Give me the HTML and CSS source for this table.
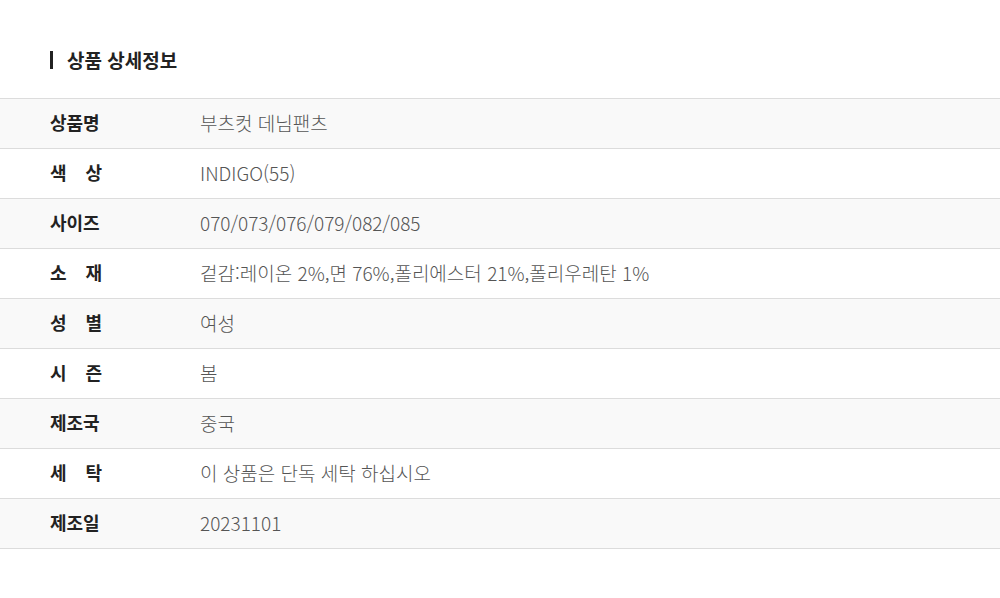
FILE: index.html
```html
<!DOCTYPE html>
<html lang="ko">
<head>
  <meta charset="UTF-8" />
  <meta name="viewport" content="width=device-width, initial-scale=1.0"/>
  <title>상품 상세정보</title>
  <link rel="stylesheet" href="styles.css">
</head>
<body>

  <h2 class="title">상품 상세정보</h2>

  <div class="info">
    <div class="row odd"><span class="label">상품명</span><span class="value">부츠컷 데님팬츠</span></div>
    <div class="row"><span class="label">색 상</span><span class="value">INDIGO(55)</span></div>
    <div class="row odd"><span class="label">사이즈</span><span class="value">070/073/076/079/082/085</span></div>
    <div class="row"><span class="label">소 재</span><span class="value">겉감:레이온 2%,면 76%,폴리에스터 21%,폴리우레탄 1%</span></div>
    <div class="row odd"><span class="label">성 별</span><span class="value">여성</span></div>
    <div class="row"><span class="label">시 즌</span><span class="value">봄</span></div>
    <div class="row odd"><span class="label">제조국</span><span class="value">중국</span></div>
    <div class="row"><span class="label">세 탁</span><span class="value">이 상품은 단독 세탁 하십시오</span></div>
    <div class="row odd"><span class="label">제조일</span><span class="value">20231101</span></div>
  </div>

</body>
</html>
```

FILE: styles.css
```css
body {
  margin: 0;
  font-family: "Noto Sans CJK KR", "Noto Sans", sans-serif;
  background: #fff;
  color: #222;
  padding-top: 51px;
}

.title {
  margin: 0 0 29px 50px;
  padding-left: 14px;
  border-left: 3px solid #222;
  font-size: 19px;
  font-weight: 700;
  line-height: 18px;
  height: 18px;
  color: #222;
}

.info {
  border-top: 1px solid #dcdcdc;
}

.row {
  display: flex;
  align-items: center;
  height: 46px;
  padding-bottom: 3px;
  border-bottom: 1px solid #dcdcdc;
  padding-left: 50px;
}

.row.odd {
  background: #f9f9f9;
}

.label {
  width: 52px;
  margin-right: 98px;
  font-size: 18px;
  font-weight: 700;
  color: #222;
  text-align: justify;
  text-align-last: justify;
}

.value {
  font-size: 19px;
  font-weight: 300;
  color: #555;
}
```
